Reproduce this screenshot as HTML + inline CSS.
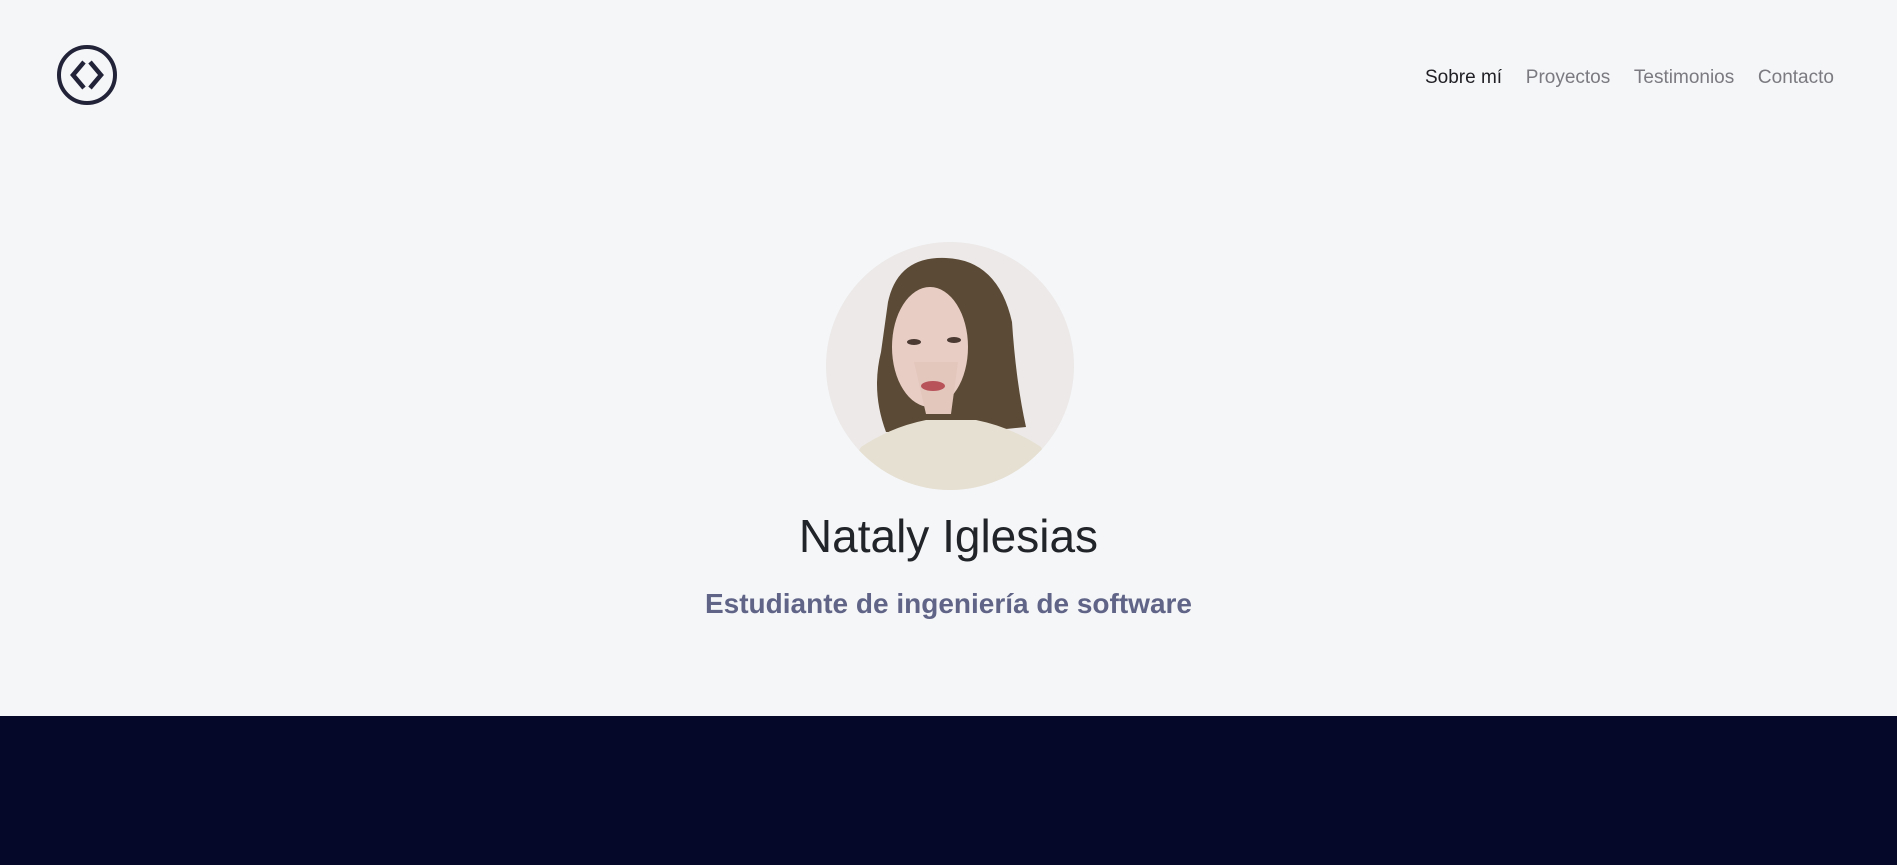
<!DOCTYPE html>
<html><head><meta charset="utf-8"><style>
html,body{margin:0;padding:0;}
body{width:1897px;height:865px;background:#f5f6f8;position:relative;overflow:hidden;font-family:"Liberation Sans",sans-serif;}
.nav{position:absolute;top:67px;left:1425px;width:409px;display:flex;justify-content:space-between;font-size:19px;color:#7a7a80;white-space:nowrap;}
.nav span:first-child{color:#1f1f24;}
.name{position:absolute;left:0;width:1897px;text-align:center;top:508px;font-size:46px;color:#212428;line-height:56px;}
.sub{position:absolute;left:0;width:1897px;text-align:center;top:587px;font-size:28px;font-weight:bold;color:#606486;line-height:34px;}
.dark{position:absolute;left:0;top:716px;width:1897px;height:149px;background:#050828;}
</style></head><body>
<svg style="position:absolute;left:56px;top:44px" width="62" height="62" viewBox="0 0 62 62">
<circle cx="31" cy="31" r="28" fill="none" stroke="#222339" stroke-width="4"/>
<path d="M28 18 L17 31 L28 44" fill="none" stroke="#222339" stroke-width="4.5"/>
<path d="M34 18 L45 31 L34 44" fill="none" stroke="#222339" stroke-width="4.5"/>
</svg>
<div class="nav"><span>Sobre mí</span><span>Proyectos</span><span>Testimonios</span><span>Contacto</span></div>
<svg style="position:absolute;left:826px;top:242px" width="248" height="248" viewBox="0 0 248 248">
<defs><clipPath id="c"><circle cx="124" cy="124" r="124"/></clipPath></defs>
<g clip-path="url(#c)">
<rect width="248" height="248" fill="#ece9e8"/>
<path d="M62 60 Q72 14 120 16 Q172 18 186 80 Q190 140 200 185 L150 190 L60 190 Q45 150 55 110 Z" fill="#5b4a35"/>
<ellipse cx="104" cy="105" rx="38" ry="60" fill="#e8cdc5"/>
<path d="M35 205 Q65 185 100 178 L150 178 Q185 185 215 205 L235 248 L10 248 Z" fill="#e6e0d2"/>
<path d="M88 120 L100 172 L125 172 L132 120 Z" fill="#e3c7bd"/>
<ellipse cx="107" cy="144" rx="12" ry="5" fill="#b8535a"/>
<ellipse cx="88" cy="100" rx="7" ry="3" fill="#4a3a32"/>
<ellipse cx="128" cy="98" rx="7" ry="3" fill="#4a3a32"/>
</g></svg>
<div class="name">Nataly Iglesias</div>
<div class="sub">Estudiante de ingeniería de software</div>
<div class="dark"></div>
</body></html>
